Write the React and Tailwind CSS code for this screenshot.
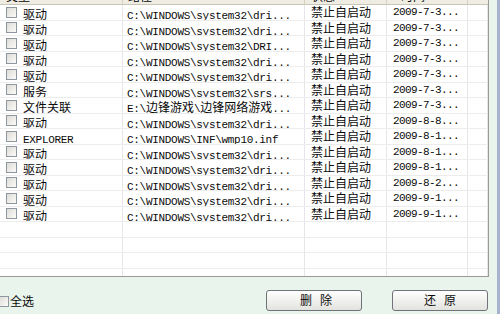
const rows = [
  ['驱动', 'C:\\WINDOWS\\system32\\dri...', '2009-7-3...'],
  ['驱动', 'C:\\WINDOWS\\system32\\dri...', '2009-7-3...'],
  ['驱动', 'C:\\WINDOWS\\system32\\DRI...', '2009-7-3...'],
  ['驱动', 'C:\\WINDOWS\\system32\\dri...', '2009-7-3...'],
  ['驱动', 'C:\\WINDOWS\\system32\\dri...', '2009-7-3...'],
  ['服务', 'C:\\WINDOWS\\system32\\srs...', '2009-7-3...'],
  ['文件关联', 'E:\\边锋游戏\\边锋网络游戏...', '2009-7-3...'],
  ['驱动', 'C:\\WINDOWS\\system32\\dri...', '2009-8-8...'],
  ['EXPLORER', 'C:\\WINDOWS\\INF\\wmp10.inf', '2009-8-1...'],
  ['驱动', 'C:\\WINDOWS\\system32\\dri...', '2009-8-1...'],
  ['驱动', 'C:\\WINDOWS\\system32\\dri...', '2009-8-1...'],
  ['驱动', 'C:\\WINDOWS\\system32\\dri...', '2009-8-2...'],
  ['驱动', 'C:\\WINDOWS\\system32\\dri...', '2009-9-1...'],
  ['驱动', 'C:\\WINDOWS\\system32\\dri...', '2009-9-1...'],
]

const cjk = { fontFamily: '"Noto Sans CJK SC", sans-serif' }
const mono = { fontFamily: '"Liberation Mono", "Noto Sans CJK SC", monospace' }

// ascii runs in a narrow mono face, chinese runs at 12px
function Mixed({ text, size = 'text-[11px] tracking-[-0.3px]' }) {
  const parts = text.split(/([\u4e00-\u9fff]+)/).filter(Boolean)
  return (
    <span className="whitespace-pre">
      {parts.map((p, i) =>
        /[\u4e00-\u9fff]/.test(p) ? (
          <span key={i} className="text-[12px]" style={cjk}>{p}</span>
        ) : (
          <span key={i} className={size} style={mono}>{p}</span>
        )
      )}
    </span>
  )
}

function Box() {
  return (
    <span className="block w-[11px] h-[11px] shrink-0 border border-[#8e979f] bg-gradient-to-br from-[#dedcd6] to-[#fbfbf9]" />
  )
}

const cols = 'grid grid-cols-[123px_182px_82px_81px_1fr]'
const cell = 'border-r border-[#e6e6e6] flex items-center overflow-hidden'

export default function App() {
  const empty = [0, 1, 2, 3, 4]
  return (
    <div className="w-[500px] h-[314px] overflow-hidden flex bg-[#e9f4ec] text-[#0a0a0a]" style={cjk}>
      <div className="flex-1 flex flex-col">
        {/* list */}
        <div className="w-[489px] h-[277px] shrink-0 bg-white border-r border-b border-[#9a9a9a] overflow-hidden">
          <div className={`${cols} h-[18px] -mt-[13px] bg-[#efede3] border-b border-[#c9c5b4] text-[12px]`}>
            <div className="border-r border-[#d4d0c0] flex items-center pl-[6px]">类型</div>
            <div className="border-r border-[#d4d0c0] flex items-center pl-[5px]">路径</div>
            <div className="border-r border-[#d4d0c0] flex items-center pl-[6px]">状态</div>
            <div className="border-r border-[#d4d0c0] flex items-center pl-[14px]">时间</div>
            <div />
          </div>
          {rows.map((r, i) => (
            <div key={i} className={`${cols} h-[15.5px] border-b border-[#ececec]`}>
              <div className={`${cell} pl-[6px] gap-[6px]`}>
                <Box />
                <Mixed text={r[0]} size="text-[11px] tracking-[-0.3px]" />
              </div>
              <div className={`${cell} pl-[4px]`}>
                <Mixed text={r[1]} />
              </div>
              <div className={`${cell} pl-[6px] text-[12px]`}>禁止自启动</div>
              <div className={`${cell} pl-[6px]`}>
                <span className="text-[11px] tracking-[-0.6px] whitespace-pre" style={mono}>{r[2]}</span>
              </div>
              <div className={cell} />
            </div>
          ))}
          {empty.map(i => (
            <div key={'e' + i} className={`${cols} h-[15.5px] border-b border-[#ececec]`}>
              <div className={cell} />
              <div className={cell} />
              <div className={cell} />
              <div className={cell} />
              <div className={cell} />
            </div>
          ))}
        </div>

        {/* bottom bar */}
        <div className="h-[37px] pt-[9px] flex items-center pr-[9px]">
          <div className="flex items-center gap-[1px] -ml-[2px] mt-[2px]">
            <Box />
            <span className="text-[12px]">全选</span>
          </div>
          <div className="flex-1" />
          <div className="flex gap-[30px]">
            <button className="w-[96px] h-[21px] rounded-[3px] border border-[#70747a] bg-gradient-to-b from-white to-[#e2e2de] flex items-center justify-center gap-[8px] text-[12px] pl-[4px]">
              <span>删</span><span>除</span>
            </button>
            <button className="w-[96px] h-[21px] rounded-[3px] border border-[#70747a] bg-gradient-to-b from-white to-[#e2e2de] flex items-center justify-center gap-[8px] text-[12px]">
              <span>还</span><span>原</span>
            </button>
          </div>
        </div>
      </div>
      <div className="w-[3px] bg-[#a7b3cf]" />
    </div>
  )
}
